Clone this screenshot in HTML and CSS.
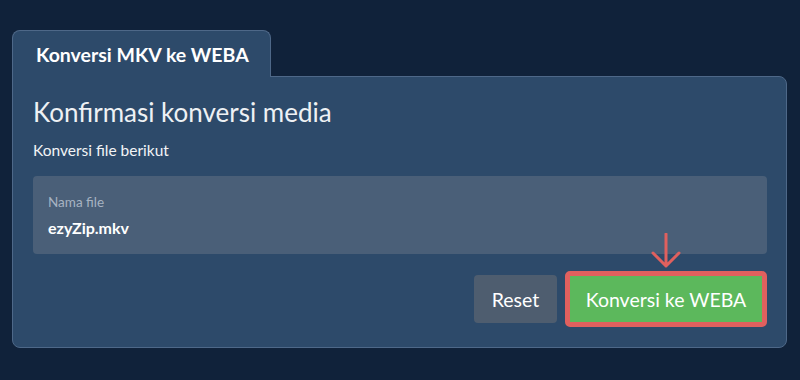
FILE: index.html
```html
<!DOCTYPE html>
<html lang="id">
<head>
<meta charset="UTF-8" />
<title>Konversi MKV ke WEBA</title>
<link rel="stylesheet" href="styles.css">
</head>
<body>
<div class="converter">
  <div class="tabs">
    <div class="tab active">Konversi MKV ke WEBA</div>
  </div>
  <div class="panel">
    <h1 class="title">Konfirmasi konversi media</h1>
    <p class="subtitle">Konversi file berikut</p>
    <div class="file-box">
      <div class="file-label">Nama file</div>
      <div class="file-name">ezyZip.mkv</div>
    </div>
    <div class="actions">
      <button class="btn btn-reset">Reset</button>
      <div class="convert-wrap">
        <svg class="hint-arrow" width="30" height="36" viewBox="0 0 30 36" aria-hidden="true">
          <path d="M15 1 V33 M2 20 L15 33 L28 20" fill="none" stroke="#e0605e" stroke-width="3" stroke-linecap="round" stroke-linejoin="round"/>
        </svg>
        <button class="btn btn-convert">Konversi ke WEBA</button>
      </div>
    </div>
  </div>
</div>
</body>
</html>
```

FILE: styles.css
```css
* {
  box-sizing: border-box;
}
body {
  margin: 0;
  padding: 30px 13px 0 12px;
  background: #10223a;
  font-family: Lato, "Open Sans", sans-serif;
  color: #fff;
}
.tabs {
  display: flex;
  position: relative;
  z-index: 1;
  margin-bottom: -1px;
}
.tab {
  width: 259px;
  height: 47px;
  padding: 0 0 0 23px;
  display: flex;
  align-items: center;
  font-size: 19.5px;
  font-weight: 700;
  background: #2d4a6a;
  border: 1px solid #4e6888;
  border-bottom: none;
  border-radius: 8px 8px 0 0;
}
.panel {
  background: #2d4a6a;
  border: 1px solid #4e6888;
  border-radius: 0 8px 8px 8px;
  padding: 20px 19px 20px 20px;
}
.title {
  margin: 0;
  font-size: 26px;
  line-height: 30px;
  font-weight: 400;
  color: #eef1f4;
}
.subtitle {
  margin: 13px 0 0;
  font-size: 15.5px;
  line-height: 20px;
  color: #f2f4f6;
}
.file-box {
  margin-top: 16px;
  background: #4a5f78;
  border-radius: 4px;
  padding: 18px 15px 16px;
}
.file-label {
  font-size: 13.5px;
  line-height: 16px;
  color: #a7b3c2;
}
.file-name {
  margin-top: 8px;
  font-size: 16px;
  line-height: 20px;
  font-weight: 700;
  color: #fff;
}
.actions {
  margin-top: 17px;
  display: flex;
  justify-content: flex-end;
  align-items: center;
  gap: 8px;
}
.btn {
  font-family: inherit;
  font-size: 19.5px;
  color: #fff;
  border: none;
  cursor: pointer;
}
.btn-reset {
  width: 83px;
  height: 48px;
  background: #4e5d6f;
  border-radius: 4px;
}
.convert-wrap {
  position: relative;
}
.btn-convert {
  display: block;
  width: 202px;
  height: 56px;
  background: #5cb85c;
  border: 5px solid #e0605e;
  border-radius: 5px;
}
.hint-arrow {
  position: absolute;
  left: 86px;
  bottom: 100%;
  margin-bottom: 2px;
}
```
